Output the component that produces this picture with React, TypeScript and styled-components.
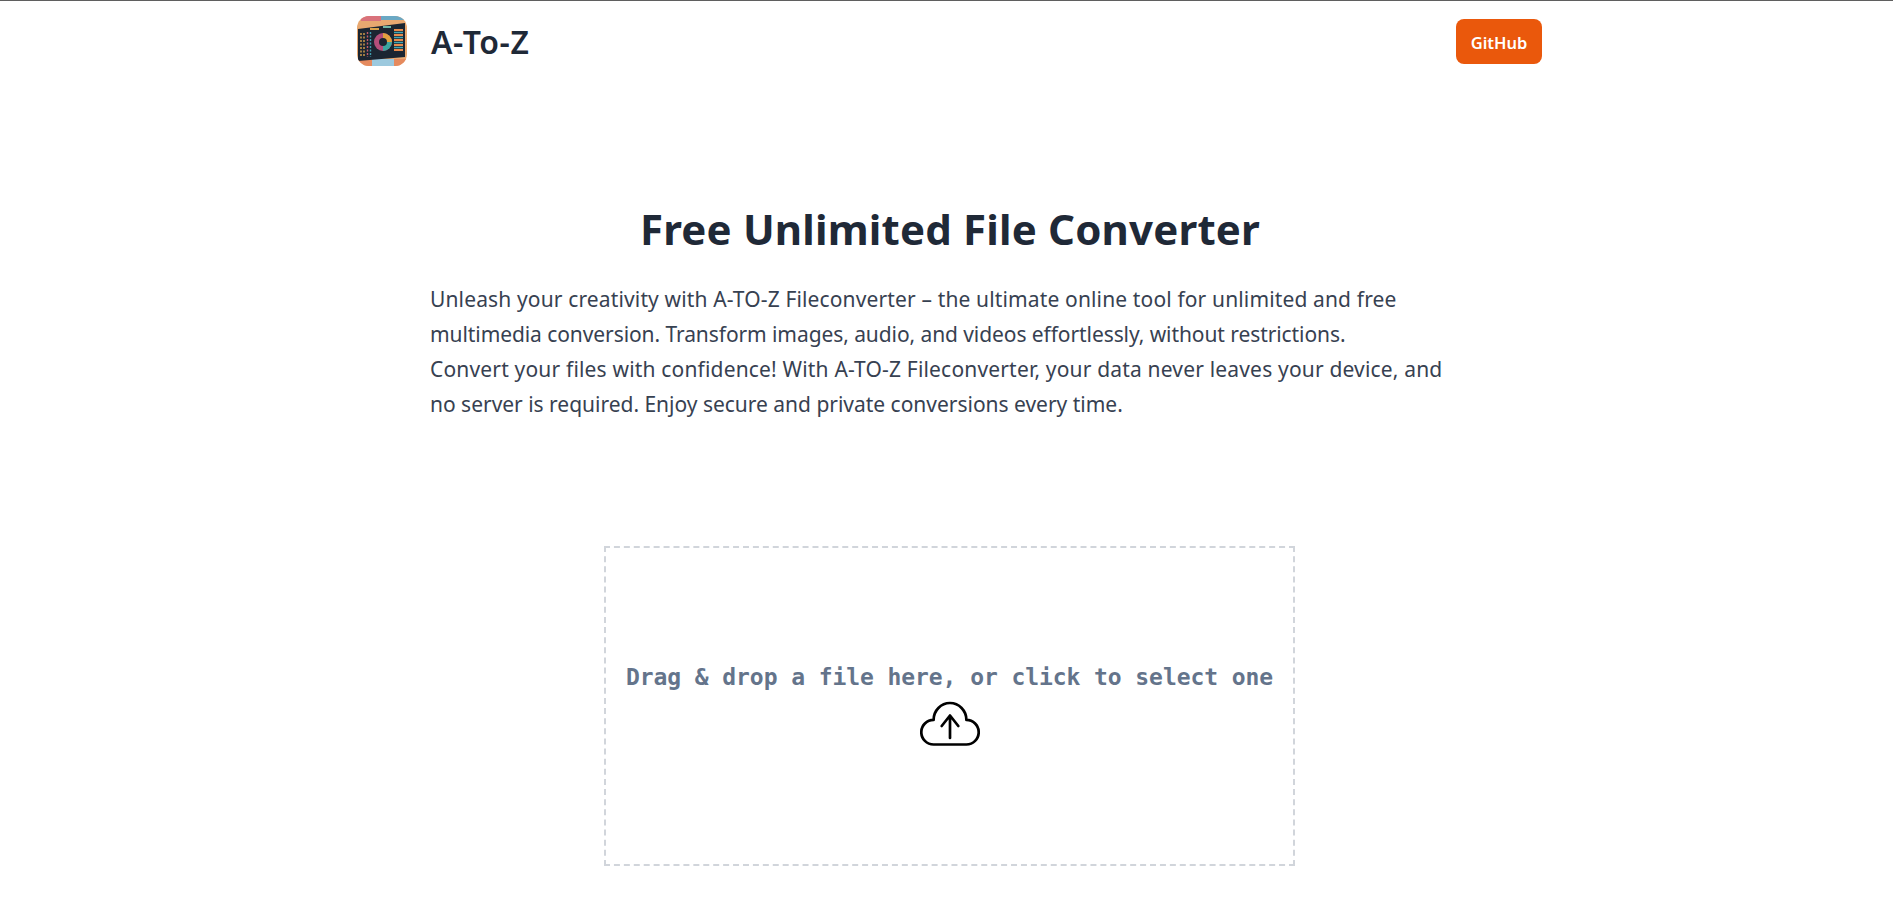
import React from "react";
import styled, { createGlobalStyle } from "styled-components";

const Global = createGlobalStyle`
  html, body { margin: 0; padding: 0; background: #fff; }
  body { font-family: "Noto Sans", "Open Sans", sans-serif; overflow: hidden; }
`;

const Page = styled.div`
  border-top: 1px solid #5f5f5f;
  height: 909px;
  overflow: hidden;
  box-sizing: border-box;
`;

const Header = styled.header`
  width: 1185px;
  margin-left: 357px;
  height: 84px;
  display: flex;
  align-items: center;
  justify-content: space-between;
`;

const Brand = styled.a`
  display: flex;
  align-items: center;
  gap: 24px;
  margin-top: -5px;
`;

const BrandName = styled.span`
  font-size: 32px;
  font-weight: 600;
  letter-spacing: 0.6px;
  color: #1f2937;
  line-height: 36px;
  padding-top: 3px;
`;

const GithubButton = styled.a`
  box-sizing: border-box;
  width: 86px;
  height: 45px;
  margin-top: -4px;
  padding-top: 2px;
  border-radius: 8px;
  background: #ea580c;
  color: #fff;
  font-size: 16.5px;
  font-weight: 600;
  display: flex;
  align-items: center;
  justify-content: center;
`;

const Hero = styled.section`
  margin-top: 116px;
  padding-left: 430px;
  width: 1030px;
`;

const Title = styled.h1`
  margin: 0;
  width: 1040px;
  text-align: center;
  font-size: 42px;
  letter-spacing: 0.17px;
  line-height: 56px;
  font-weight: 700;
  color: #1f2937;
`;

const Intro = styled.div`
  margin: 25px 0 0;
  font-size: 21px;
  line-height: 35px;
  color: #374151;
  white-space: nowrap;
`;

const IntroLine = styled.p<{ $track: number }>`
  margin: 0;
  letter-spacing: ${(p) => p.$track}px;
`;

const DropZone = styled.div`
  box-sizing: border-box;
  width: 691px;
  height: 320px;
  margin: 124px 0 0 604px;
  padding-top: 2px;
  border: 2px dashed #d1d5db;
  display: flex;
  flex-direction: column;
  align-items: center;
  justify-content: center;
  cursor: pointer;
`;

const DropText = styled.p`
  margin: 0;
  font-family: "DejaVu Sans Mono", "Liberation Mono", monospace;
  font-size: 23px;
  letter-spacing: -0.08px;
  line-height: 34px;
  font-weight: 700;
  color: #64748b;
  white-space: nowrap;
`;

const IconSvg = styled.svg`
  display: block;
  width: 60px;
  height: 60px;
  fill: none;
  stroke: #000;
  stroke-width: 2.7;
  stroke-linecap: round;
  stroke-linejoin: round;
`;

const UploadIcon = () => (
  <IconSvg viewBox="0 -7.5 60 60">
    <path d="M13.6 43H46.4A12.3 12.3 0 0 0 46.4 18.4A16.4 16.9 0 0 0 13.6 18.4A12.3 12.3 0 0 0 13.6 43Z" />
    <path d="M30 14V36.5M21.7 24.5L30 14L38.3 24.5" />
  </IconSvg>
);

const Logo = () => (
  <svg width="50" height="50" viewBox="0 0 50 50" aria-label="A-To-Z logo">
    <defs>
      <clipPath id="logo-clip">
        <rect width="50" height="50" rx="12" />
      </clipPath>
    </defs>
    <g clipPath="url(#logo-clip)">
      <rect width="50" height="50" fill="#e8a870" />
      <rect x="4" y="0" width="20" height="5" fill="#d9727b" />
      <rect x="24" y="0" width="24" height="4" fill="#6aa8c4" />
      <rect x="0" y="43" width="50" height="7" fill="#e58a5e" />
      <rect x="15" y="43" width="22" height="7" fill="#9cc9de" />
      <path d="M1 13 L48 7 V41 L1 45 Z" fill="#1b2531" />
      <rect x="26" y="10" width="8" height="2" fill="#6fb7a8" />
      <rect x="13" y="12" width="9" height="2" fill="#d9a14c" />
      <path d="M4 17v24M7 17v24" stroke="#d9a14c" strokeWidth="1.4" strokeDasharray="2 1.5" />
      <path d="M10.5 16v25" stroke="#c45a6a" strokeWidth="1.4" strokeDasharray="2 1.5" />
      <path d="M13.5 16v25" stroke="#3f9fb0" strokeWidth="1.4" strokeDasharray="2 1.5" />
      <circle cx="26" cy="26" r="9" fill="#b34e7a" />
      <path d="M26 17a9 9 0 0 1 9 9h-9z" fill="#e1a13f" />
      <path d="M26 26h9a9 9 0 0 1-9 9z" fill="#3ba6a0" />
      <circle cx="26" cy="26" r="4" fill="#1b2531" />
      <path d="M37 14h9M37 19h9M37 24h9M37 29h9M37 34h9" stroke="#e88a4c" strokeWidth="2" />
      <path d="M37 16.5h9M37 21.5h9M37 26.5h9M37 31.5h9" stroke="#41a7b5" strokeWidth="1.4" />
    </g>
  </svg>
);

export default function App() {
  return (
    <Page>
      <Global />
      <Header>
        <Brand>
          <Logo />
          <BrandName>A-To-Z</BrandName>
        </Brand>
        <GithubButton>GitHub</GithubButton>
      </Header>
      <Hero>
        <Title>Free Unlimited File Converter</Title>
        <Intro>
          <IntroLine $track={0.14}>
            Unleash your creativity with A-TO-Z Fileconverter – the ultimate online tool for unlimited and free
          </IntroLine>
          <IntroLine $track={-0.08}>
            multimedia conversion. Transform images, audio, and videos effortlessly, without restrictions.
          </IntroLine>
          <IntroLine $track={0.175}>
            Convert your files with confidence! With A-TO-Z Fileconverter, your data never leaves your device, and
          </IntroLine>
          <IntroLine $track={-0.015}>
            no server is required. Enjoy secure and private conversions every time.
          </IntroLine>
        </Intro>
      </Hero>
      <DropZone>
        <DropText>Drag &amp; drop a file here, or click to select one</DropText>
        <UploadIcon />
      </DropZone>
    </Page>
  );
}
